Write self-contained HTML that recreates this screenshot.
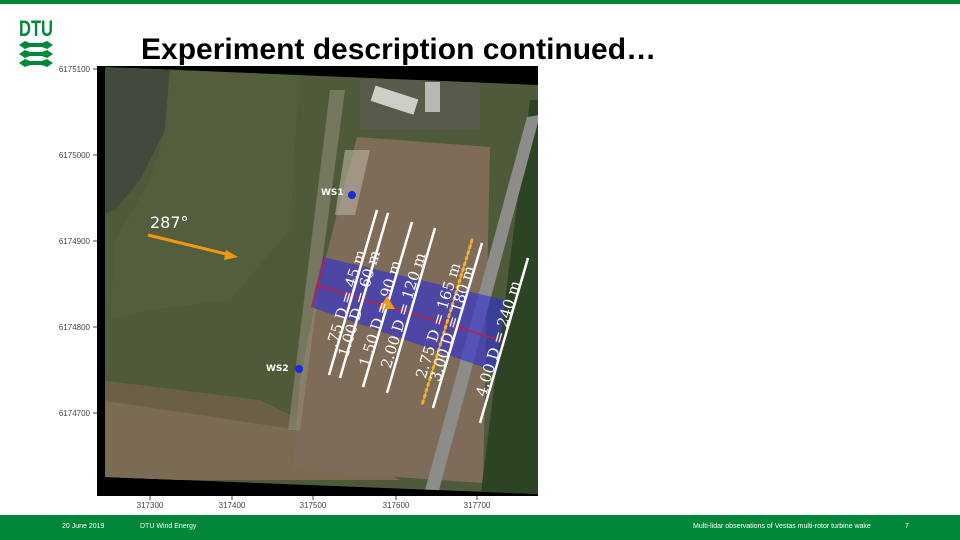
<!DOCTYPE html>
<html><head><meta charset="utf-8"><style>
body{margin:0;width:960px;height:540px;position:relative;background:#fff;overflow:hidden;font-family:"Liberation Sans",sans-serif}
.t{position:absolute;white-space:nowrap}
</style></head><body>
<div style="position:absolute;left:0;top:0;width:960px;height:4px;background:#008835"></div>
<svg style="position:absolute;left:0;top:0" width="960" height="540">
<text x="19" y="36" font-family="Liberation Sans" font-weight="bold" font-size="22" fill="#00883a" textLength="34" lengthAdjust="spacingAndGlyphs">DTU</text>
<g fill="#00883a">
<path d="M19 45 L25 41 L30 43 L42 43 L47 41 L53 45 L47 49 L42 47 L30 47 L25 49Z"/>
<path d="M19 54 L25 50 L30 52 L42 52 L47 50 L53 54 L47 58 L42 56 L30 56 L25 58Z"/>
<path d="M19 63 L25 59 L30 61 L42 61 L47 59 L53 63 L47 67 L42 65 L30 65 L25 67Z"/>
</g>
<g font-family="Liberation Sans" font-size="8" fill="#444" text-anchor="end">
<text x="90" y="72">6175100</text><text x="90" y="158">6175000</text><text x="90" y="244">6174900</text><text x="90" y="330">6174800</text><text x="90" y="416">6174700</text>
</g>
<g font-family="Liberation Sans" font-size="8" fill="#444" text-anchor="middle">
<text x="150" y="508">317300</text><text x="232" y="508">317400</text><text x="313" y="508">317500</text><text x="396" y="508">317600</text><text x="477" y="508">317700</text>
</g>
<g stroke="#444" stroke-width="1"><path d="M93 69H97M93 155H97M93 241H97M93 327H97M93 413H97M150 496V500M232 496V500M313 496V500M396 496V500M477 496V500"/></g>
<rect x="97" y="66" width="441" height="430" fill="#000"/>
<defs><clipPath id="c"><polygon points="105,67 538,85 538,494 105,477"/></clipPath></defs>
<g clip-path="url(#c)">
<rect x="97" y="66" width="441" height="430" fill="#4f5a3a"/>
<polygon points="100,66 170,66 165,130 140,180 115,210 100,215" fill="#414a3c"/>
<polygon points="170,66 300,66 290,230 230,300 150,310 110,320 115,240 150,180 165,130" fill="#535e3c"/>
<polygon points="100,380 260,400 300,420 300,480 100,480" fill="#6b5f48"/>
<polygon points="100,400 300,430 400,480 100,480" fill="#7a6b52"/>
<polygon points="357,137 490,147 483,483 293,470 300,380 320,280" fill="#7e6c58"/>
<polygon points="360,80 480,80 480,130 360,130" fill="#5a5a4a"/>
<rect x="372" y="92" width="45" height="16" fill="#cfcfc8" transform="rotate(18 394 100)"/>
<rect x="425" y="82" width="15" height="30" fill="#b8b8b4"/>
<polygon points="530,100 540,100 540,500 480,500" fill="#2d4424"/>
<polygon points="527,117 540,115 438,494 424,494" fill="#8c8c88"/>
<polygon points="330,90 345,90 300,430 288,430" fill="#8f8a78" opacity=".6"/>
<polygon points="345,150 370,150 355,215 335,215" fill="#b8b2a0" opacity=".6"/>
</g>
<polygon points="323,257 505,300 497,372 311,307" fill="rgba(45,45,215,0.6)"/>
<line x1="316" y1="285" x2="503" y2="341" stroke="#c0203a" stroke-width="1.5"/>
<line x1="325" y1="257" x2="312" y2="307" stroke="#c0203a" stroke-width="1.5"/>
<g stroke="#fff" stroke-width="2.5">
<line x1="377" y1="210" x2="329" y2="375"/><line x1="388" y1="213" x2="340" y2="378"/>
<line x1="412" y1="222" x2="363" y2="387"/><line x1="435" y1="228" x2="387" y2="393"/>
<line x1="482" y1="243" x2="433" y2="408"/><line x1="528" y1="258" x2="480" y2="423"/>
</g>
<line x1="472" y1="240" x2="422" y2="405" stroke="#f0b030" stroke-width="3" stroke-dasharray="2 4" stroke-linecap="round"/>
<line x1="472" y1="240" x2="422" y2="405" stroke="#f0b030" stroke-width="1.2"/>
<polygon points="387,296 395,309 379,309" fill="#f09a10"/>
<line x1="148" y1="235" x2="230" y2="255" stroke="#f09a10" stroke-width="3"/>
<polygon points="238,257 226,250 224,260" fill="#f09a10"/>
<circle cx="352" cy="195" r="4" fill="#1a2ae0"/><circle cx="299" cy="369" r="4" fill="#1a2ae0"/>
<g font-family="DejaVu Sans" font-weight="bold" font-size="9" fill="#fff"><text x="321" y="195">WS1</text><text x="266" y="371">WS2</text></g>
<text x="150" y="228" font-family="DejaVu Sans" font-size="16" fill="#fff">287°</text>
<g font-family="DejaVu Serif" font-size="15" fill="#fff" text-anchor="middle">
<text transform="translate(351,300) rotate(-73)">.75 D = 45 m</text>
<text transform="translate(364,305) rotate(-73)">1.00 D = 60 m</text>
<text transform="translate(385,315) rotate(-73)">1.50 D = 90 m</text>
<text transform="translate(408,312) rotate(-73)">2.00 D = 120 m</text>
<text transform="translate(443,322) rotate(-73)">2.75 D = 165 m</text>
<text transform="translate(457,325) rotate(-73)">3.00 D = 180 m</text>
<text transform="translate(503,340) rotate(-73)">4.00 D = 240 m</text>
</g>
</svg>
<div class="t" style="left:141px;top:33px;font-size:30px;font-weight:bold;color:#000">Experiment description continued…</div>
<div style="position:absolute;left:0;top:515px;width:960px;height:25px;background:#00873a"></div>
<div class="t" style="left:62px;top:523px;font-size:7px;color:#fff">20 June 2019</div>
<div class="t" style="left:140px;top:523px;font-size:7px;color:#fff">DTU Wind Energy</div>
<div class="t" style="left:693px;top:523px;font-size:7px;color:#fff">Multi-lidar observations of Vestas multi-rotor turbine wake</div>
<div class="t" style="left:905px;top:523px;font-size:7px;color:#fff">7</div>
</body></html>
